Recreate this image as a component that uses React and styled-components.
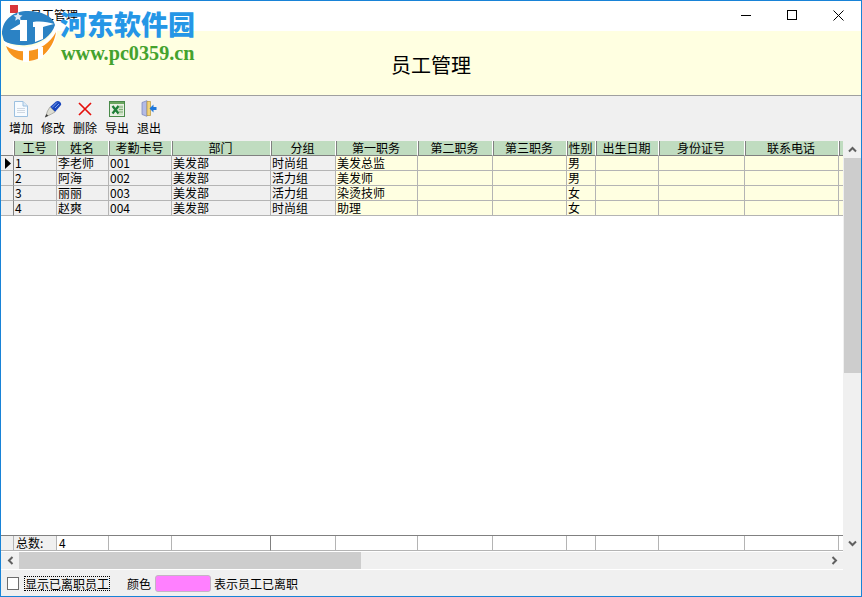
import React from "react";
import styled, { createGlobalStyle } from "styled-components";

const FONT = `"Noto Sans CJK SC", "Liberation Sans", sans-serif`;
const COLS = [13, 43, 52, 63, 99, 65, 82, 75, 74, 29, 63, 86, 94, 5];
const TEMPLATE = COLS.map((c) => `${c}px`).join(" ");

const Global = createGlobalStyle`
  html, body { margin: 0; padding: 0; background: #fff; }
  body { font-family: ${FONT}; font-size: 12px; color: #000; }
`;

const Win = styled.div`
  position: relative;
  box-sizing: border-box;
  width: 862px;
  height: 597px;
  border: 1px solid #1883d7;
  background: #f0f0f0;
  display: flex;
  flex-direction: column;
  overflow: hidden;
`;
const TitleBar = styled.div`
  height: 30px;
  flex: none;
  background: #fff;
  display: flex;
  align-items: center;
  padding-left: 9px;
`;
const AppMark = styled.span`
  width: 8px;
  height: 8px;
  background: #d9363a;
  margin: -14px 12px 0 0;
`;
const TitleText = styled.span`
  font-size: 12px;
  line-height: 16px;
  flex: 1;
  margin-top: -3px;
`;
const WinBtn = styled.div`
  width: 46px;
  height: 30px;
  display: flex;
  align-items: center;
  justify-content: center;
  margin-top: -2px;
`;
const Banner = styled.div`
  height: 65px;
  flex: none;
  box-sizing: border-box;
  background: #ffffe1;
  border-bottom: 1px solid #a0a0a0;
  display: flex;
  align-items: center;
  justify-content: center;
`;
const Heading = styled.div`
  font-size: 20px;
  font-weight: 400;
  line-height: 26px;
  margin-top: 3px;
`;
const Toolbar = styled.div`
  height: 45px;
  flex: none;
  box-sizing: border-box;
  display: flex;
  padding: 4px 0 0 4px;
`;
const ToolBtn = styled.div`
  width: 32px;
  display: flex;
  flex-direction: column;
  align-items: center;
  font-size: 12px;
  line-height: 16px;
  gap: 3px;
`;
const IconSlot = styled.div`
  height: 17px;
  display: flex;
  align-items: center;
  justify-content: center;
`;
const GridArea = styled.div`
  height: 411px;
  flex: none;
  display: grid;
  grid-template-columns: 842px 18px;
  grid-template-rows: 1fr;
`;
const Sheet = styled.div`
  background: #fff;
  display: flex;
  flex-direction: column;
`;
const Row = styled.div`
  display: grid;
  grid-template-columns: ${TEMPLATE};
  height: 15px;
  flex: none;
`;
const HeadCell = styled.div`
  box-sizing: border-box;
  height: 15px;
  background: ${(p) => (p.$blank ? "#f0f0f0" : "#c0dcc0")};
  border-right: 1px solid #fff;
  border-bottom: 1px solid #808080;
  border-left: ${(p) => (p.$blank ? "0" : "1px solid #808080")};
  padding-right: 2px;
  text-align: center;
  font-size: 12px;
  line-height: 14px;
  white-space: nowrap;
`;
const Cell = styled.div`
  box-sizing: border-box;
  height: 15px;
  background: ${(p) => (p.$cream ? "#ffffe1" : "#f0f0f0")};
  border-right: 1px solid #b4b4b4;
  border-bottom: 1px solid #b4b4b4;
  padding-left: 1px;
  font-size: 12px;
  line-height: 14px;
  white-space: nowrap;
`;
const Indicator = styled.div`
  box-sizing: border-box;
  height: 15px;
  background: #f0f0f0;
  border-bottom: 1px solid #b4b4b4;
  border-right: 1px solid #808080;
  display: flex;
  align-items: center;
  padding-left: 4px;
`;
const Spacer = styled.div`
  flex: 1;
`;
const FootRow = styled(Row)`
  height: 16px;
  border-top: 1px solid #808080;
  background: #fff;
`;
const FootCell = styled.div`
  box-sizing: border-box;
  height: 15px;
  background: ${(p) => (p.$gray ? "#f0f0f0" : "#fff")};
  border-right: 1px solid ${(p) => (p.$dark ? "#808080" : "#b4b4b4")};
  border-bottom: 1px solid #b4b4b4;
  padding-left: ${(p) => (p.$pad ? 2 : 1)}px;
  font-size: 12px;
  line-height: 14px;
  white-space: nowrap;
`;
const VScroll = styled.div`
  background: #f0f0f0;
  display: flex;
  flex-direction: column;
  align-items: center;
`;
const ArrowBox = styled.div`
  width: 17px;
  height: 17px;
  flex: none;
  display: flex;
  align-items: center;
  justify-content: center;
`;
const VThumb = styled.div`
  width: 17px;
  height: 215px;
  flex: none;
  background: #cdcdcd;
`;
const HScroll = styled.div`
  height: 18px;
  flex: none;
  width: 842px;
  box-sizing: border-box;
  border-bottom: 1px solid #fff;
  background: #f0f0f0;
  display: flex;
  align-items: center;
  padding-left: 1px;
`;
const HThumb = styled.div`
  width: 342px;
  height: 17px;
  flex: none;
  background: #cdcdcd;
`;
const StatusBar = styled.div`
  flex: 1;
  display: flex;
  align-items: center;
  padding: 1px 0 0 6px;
  font-size: 12px;
  line-height: 16px;
`;
const CheckBox = styled.span`
  box-sizing: border-box;
  width: 12px;
  height: 13px;
  background: #fff;
  border: 1px solid #6d6d6d;
  margin-right: 5px;
  flex: none;
`;
const FocusLabel = styled.span`
  outline: 1px dotted #000;
  outline-offset: -1px;
  height: 15px;
  line-height: 15px;
  padding: 0 1px;
  margin-right: 17px;
`;
const Swatch = styled.span`
  box-sizing: border-box;
  width: 56px;
  height: 17px;
  background: #ff80ff;
  border: 1px solid #c4b4c4;
  border-radius: 3px;
  margin: -1px 3px 0 4px;
`;
const Watermark = styled.div`
  position: absolute;
  left: -1px;
  top: -1px;
  width: 200px;
  height: 64px;
  pointer-events: none;
`;
const Logo = styled.svg`
  position: absolute;
  left: 0;
  top: 6px;
`;
const WmCn = styled.div`
  position: absolute;
  left: 60px;
  top: 6px;
  font-family: "Noto Sans CJK SC", sans-serif;
  font-weight: 900;
  font-size: 27px;
  line-height: 36px;
  color: #2596e6;
  white-space: nowrap;
`;
const WmEn = styled.div`
  position: absolute;
  left: 61px;
  top: 43px;
  font-family: "Liberation Serif", serif;
  font-weight: 700;
  font-size: 20.2px;
  line-height: 20px;
  color: #44a22e;
  white-space: nowrap;
`;

const HEAD = ["工号", "姓名", "考勤卡号", "部门", "分组", "第一职务", "第二职务", "第三职务", "性别", "出生日期", "身份证号", "联系电话"];
const DATA = [
  ["1", "李老师", "001", "美发部", "时尚组", "美发总监", "", "", "男"],
  ["2", "阿海", "002", "美发部", "活力组", "美发师", "", "", "男"],
  ["3", "丽丽", "003", "美发部", "活力组", "染烫技师", "", "", "女"],
  ["4", "赵爽", "004", "美发部", "时尚组", "助理", "", "", "女"],
];

const Chevron = ({ d }) => (
  <svg width="9" height="7" viewBox="0 0 9 7">
    <path d={d} fill="none" stroke="#606060" strokeWidth="2" />
  </svg>
);
const ChevronSide = ({ d }) => (
  <svg width="7" height="9" viewBox="0 0 7 9">
    <path d={d} fill="none" stroke="#606060" strokeWidth="2" />
  </svg>
);

const DocIcon = () => (
  <svg width="14" height="16" viewBox="0 0 14 16">
    <path d="M.5.5h8.5l4.500 4.500v10.500H.5z" fill="#f7fbff" stroke="#9cc0e0" />
    <path d="M9 .5V5h4.500" fill="#dce9f5" stroke="#9cc0e0" />
    <path d="M3 7.500h8M3 9.500h8M3 11.500h8" stroke="#cfd8e2" />
  </svg>
);
const PenIcon = () => (
  <svg width="18" height="18" viewBox="0 0 18 18">
    <path d="M6 7L12 1.500C14 -.2 18 2 17 5L11 12z" fill="#1a46bc" />
    <path d="M13 2.500L8 7.500M15 4l-4 4" stroke="#7ca4ee" strokeWidth="1" />
    <path d="M6 7l5 5-3.500 2L1.500 17 3.500 11z" fill="#dcdcd2" stroke="#9a9a92" strokeWidth=".7" />
    <path d="M.8 17.500L2.500 14 4.300 15.800z" fill="#3a3a3a" />
  </svg>
);
const CrossIcon = () => (
  <svg width="14" height="14" viewBox="0 0 14 14">
    <path d="M1 1l12 12M13 1L1 13" stroke="#e5100c" strokeWidth="1.7" />
  </svg>
);
const ExcelIcon = () => (
  <svg width="16" height="16" viewBox="0 0 16 16">
    <rect x=".5" y=".5" width="15" height="15" fill="#e9f0e4" stroke="#4a8a4a" />
    <rect x="1" y="1" width="14" height="2" fill="#6aa55f" />
    <path d="M8 4h6v10H8z" fill="#cfe2c6" />
    <path d="M3.500 5l6 7.500M9.500 5l-6 7.500" stroke="#1f7f38" strokeWidth="2.300" />
    <path d="M10 6h4M10 8.500h4M10 11h4" stroke="#7fae78" />
  </svg>
);
const ExitIcon = () => (
  <svg width="16" height="17" viewBox="0 0 16 17">
    <path d="M1 2.500L6 .7v15.600l-5-1.800z" fill="#b3bbe6" stroke="#7482b8" strokeWidth=".7" />
    <path d="M6 1.500h3.500v14H6z" fill="#f1d37a" stroke="#b8963c" strokeWidth=".7" />
    <path d="M15.500 7H12.500V4.500L8.500 8.500l4 4V10h3z" fill="#1e78dc" />
  </svg>
);

const TOOLS = [
  ["增加", <DocIcon key="a" />],
  ["修改", <PenIcon key="b" />],
  ["删除", <CrossIcon key="c" />],
  ["导出", <ExcelIcon key="d" />],
  ["退出", <ExitIcon key="e" />],
];

export default function App() {
  return (
    <>
      <Global />
      <Win>
        <TitleBar>
          <AppMark />
          <TitleText>员工管理</TitleText>
          <WinBtn>
            <svg width="10" height="10" viewBox="0 0 10 10"><path d="M0 5.500h10" stroke="#000" /></svg>
          </WinBtn>
          <WinBtn>
            <svg width="10" height="10" viewBox="0 0 10 10"><rect x=".5" y=".5" width="9" height="9" fill="none" stroke="#000" /></svg>
          </WinBtn>
          <WinBtn>
            <svg width="11" height="11" viewBox="0 0 11 11"><path d="M.5.5l10 10M10.500.5l-10 10" stroke="#000" /></svg>
          </WinBtn>
        </TitleBar>
        <Banner>
          <Heading>员工管理</Heading>
        </Banner>
        <Toolbar>
          {TOOLS.map(([label, icon]) => (
            <ToolBtn key={label}>
              <IconSlot>{icon}</IconSlot>
              <span>{label}</span>
            </ToolBtn>
          ))}
        </Toolbar>
        <GridArea>
          <Sheet>
            <Row>
              {[...Array(COLS.length)].map((_, i) => {
                const blank = i === 0 || i === COLS.length - 1;
                return <HeadCell key={i} $blank={i === 0}>{blank ? "" : HEAD[i - 1]}</HeadCell>;
              })}
            </Row>
            {DATA.map((r, ri) => (
              <Row key={ri}>
                <Indicator>
                  {ri === 0 && (
                    <svg width="6" height="11" viewBox="0 0 6 11"><path d="M0 0l6 5.500L0 11z" fill="#000" /></svg>
                  )}
                </Indicator>
                {[...Array(COLS.length - 1)].map((_, i) => (
                  <Cell key={i} $cream={i >= 5}>{r[i] || ""}</Cell>
                ))}
              </Row>
            ))}
            <Spacer />
            <FootRow>
              <FootCell $gray />
              <FootCell $gray $pad>总数:</FootCell>
              <FootCell $pad>4</FootCell>
              <FootCell />
              <FootCell $dark />
              {[...Array(COLS.length - 5)].map((_, i) => (
                <FootCell key={i} />
              ))}
            </FootRow>
          </Sheet>
          <VScroll>
            <ArrowBox><Chevron d="M1 5.500L4.500 2 8 5.500" /></ArrowBox>
            <VThumb />
            <Spacer />
            <ArrowBox><Chevron d="M1 1.500L4.500 5 8 1.500" /></ArrowBox>
          </VScroll>
        </GridArea>
        <HScroll>
          <ArrowBox><ChevronSide d="M5.500 1L2 4.500 5.500 8" /></ArrowBox>
          <HThumb />
          <Spacer />
          <ArrowBox><ChevronSide d="M1.500 1L5 4.500 1.500 8" /></ArrowBox>
        </HScroll>
        <StatusBar>
          <CheckBox />
          <FocusLabel>显示已离职员工</FocusLabel>
          <span>颜色</span>
          <Swatch />
          <span>表示员工已离职</span>
        </StatusBar>
        <Watermark>
          <Logo width="58" height="56" viewBox="0 0 58 56">
            <path d="M2 28C2 13 14 5 28 5c13 0 25 5 27 14-3 10-14 19-28 20C16 40 7 37 4 35z" fill="#2b82c4" />
            <path d="M3 34c6 5 15 8 25 7 12-1 24-9 28-22 2 4 1 11-1 16-5 12-15 20-27 20C16 55 7 46 3 34z" fill="#fff" />
            <path d="M6 40c6 4 14 6 22 5 12-1 22-8 28-19-2 14-13 29-28 29C17 55 9 49 6 40z" fill="#f7941d" />
            <path d="M23 56V43h6v13zM38 54V41h5v11z" fill="#fff" />
            <path d="M10 24l10-6v-4h7v21h-7V24h-10z" fill="#fff" />
            <path d="M33 16c8-1 15 0 21 2-4 1-8 2-11 3v12l-8 3V21h-2z" fill="#fff" />
            <path d="M18 6l1.300 3 3.200.4-2.400 2.100.7 3.200-2.800-1.600-2.800 1.600.7-3.200L13.500 9.400l3.200-.4z" fill="#dfe9f4" />
          </Logo>
          <WmCn>河东软件园</WmCn>
          <WmEn>www.pc0359.cn</WmEn>
        </Watermark>
      </Win>
    </>
  );
}
